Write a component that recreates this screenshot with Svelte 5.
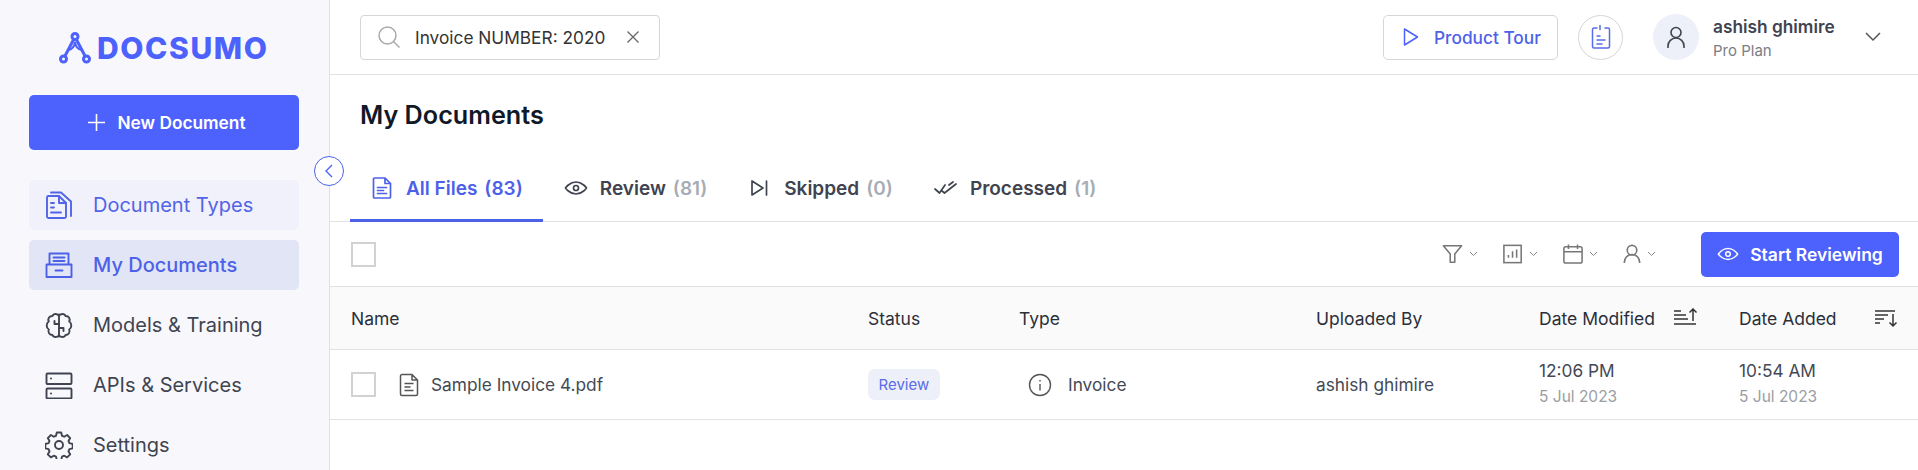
<script>
	let query = 'Invoice NUMBER: 2020';

	const nav = [
		{ label: 'Document Types', icon: 'types', cls: 'soft' },
		{ label: 'My Documents', icon: 'docs', cls: 'active' },
		{ label: 'Models & Training', icon: 'brain', cls: '' },
		{ label: 'APIs & Services', icon: 'server', cls: '' },
		{ label: 'Settings', icon: 'gear', cls: '' }
	];

	const tabs = [
		{ label: 'All Files', count: 83, icon: 'file', active: true },
		{ label: 'Review', count: 81, icon: 'eye' },
		{ label: 'Skipped', count: 0, icon: 'skip' },
		{ label: 'Processed', count: 1, icon: 'checks' }
	];
</script>

<div class="app">
	<aside class="sidebar">
		<div class="logo">
			<svg width="32" height="32" viewBox="0 0 32 32" fill="none" stroke="currentColor" stroke-width="3">
				<circle cx="16" cy="4.500" r="3" />
				<circle cx="4.500" cy="27" r="3" />
				<circle cx="27.500" cy="27" r="3" />
				<path d="M14.600 7.500 L6 24 M17.400 7.500 L26 24" />
				<path d="M9.500 18 Q15 17 16 10 Q17 17 22.500 18" stroke-width="2" />
			</svg>
			<span>DOCSUMO</span>
		</div>
		<button class="new-doc">
			<svg width="17" height="17" viewBox="0 0 17 17" stroke="#fff" stroke-width="1.600"><path d="M8.500 0v17M0 8.500h17" /></svg>
			New Document
		</button>
		<nav>
			{#each nav as item}
				<div class="nav-item {item.cls}">
					<svg class="nav-icon" width="28" height="28" viewBox="0 0 28 28" fill="none" stroke="currentColor" stroke-width="1.900" stroke-linecap="round" stroke-linejoin="round">
						{#if item.icon === 'types'}
							<path d="M2 6.500A1.500 1.500 0 0 1 3.500 5H14l7 7v13.500a1.500 1.500 0 0 1-1.500 1.500h-16A1.500 1.500 0 0 1 2 25.500z" />
							<path d="M6 1.500h10l10 9V25M14 5v7h7M6 12h3M6 16.500h3M6 21.500h10" />
						{:else if item.icon === 'docs'}
							<path d="M4.500 13V2.500h19V13M1.500 13.500h25V26h-25zM8.500 6.500h11M8.500 10h11M10.500 19.500h7" />
						{:else if item.icon === 'brain'}
							<path d="M14 3.500v22M14 5C13 2.500 8.500 2 7.500 5 4 5 2.500 8 3.800 10.500 1 12 1 17 3.800 18.500 2.500 21 4.500 24 7.500 24c1 3 5.500 2.500 6.500 0" />
							<path d="M14 5c1-2.500 5.500-3 6.500 0 3.500 0 5 3 3.700 5.500 2.800 1.500 2.800 6.500 0 8 1.300 2.500-.7 5.500-3.700 5.500-1 3-5.500 2.500-6.500 0" />
							<path d="M14 13H9.500v-3M14 17h4.500v3" />
						{:else if item.icon === 'server'}
							<rect x="1.500" y="2.500" width="25" height="10.500" rx="1" />
							<rect x="1.500" y="17.500" width="25" height="10" rx="1" />
							<path d="M6 7.500h.1M6 22.500h.1" />
						{:else}
							<circle cx="14" cy="14" r="4" />
							<path d="M11.800 1.500h4.400l.8 3.300 2.200.9 2.900-1.700 3.100 3.100-1.700 2.900.9 2.200 3.300.8v4.400l-3.300.8-.9 2.200 1.700 2.900-3.100 3.100-2.900-1.700-2.200.9-.8 3.300h-4.400l-.8-3.300-2.200-.9-2.900 1.700-3.100-3.100 1.700-2.900-.9-2.200-3.300-.8v-4.400l3.300-.8.9-2.200-1.700-2.900 3.100-3.100 2.900 1.700 2.200-.9z" />
						{/if}
					</svg>
					<span>{item.label}</span>
				</div>
			{/each}
		</nav>
	</aside>

	<button class="collapse" aria-label="Collapse">
		<svg width="10" height="14" viewBox="0 0 10 14" fill="none" stroke="#4d61fc" stroke-width="1.400"><path d="M8 1 2 7l6 6" /></svg>
	</button>

	<main>
		<header class="topbar">
			<div class="search">
				<svg width="22" height="22" viewBox="0 0 22 22" fill="none" stroke="#a9a9a9" stroke-width="1.500"><circle cx="9.500" cy="9.500" r="8.500" /><path d="M15.500 15.500l6 6" /></svg>
				<span class="query">{query}</span>
				<svg width="14" height="14" viewBox="0 0 14 14" fill="none" stroke="#666" stroke-width="1.300"><path d="M1.500 1.500l11 11M12.500 1.500l-11 11" /></svg>
			</div>
			<div class="top-right">
				<button class="tour">
					<svg width="16" height="20" viewBox="0 0 16 20" fill="none" stroke="#4d61fc" stroke-width="1.500" stroke-linejoin="round"><path d="M1.500 2v16L14.500 10z" /></svg>
					Product Tour
				</button>
				<div class="round-btn">
					<svg width="20" height="26" viewBox="0 0 20 26" fill="none" stroke="#5a6ce8" stroke-width="1.500" stroke-linecap="round"><path d="M6 4H3a1.500 1.500 0 0 0-1.500 1.500v17A1.500 1.500 0 0 0 3 24h14a1.500 1.500 0 0 0 1.500-1.500v-17A1.500 1.500 0 0 0 17 4h-3M9 1.500v4M6 12h3M6 16h8M6 20h5" /></svg>
				</div>
				<div class="avatar">
					<svg width="18" height="23" viewBox="0 0 18 23" fill="none" stroke="#3e4451" stroke-width="1.600"><circle cx="9" cy="6.500" r="5" /><path d="M1 22v-2a8 8 0 0 1 16 0v2" /></svg>
				</div>
				<div class="user">
					<div class="user-name">ashish ghimire</div>
					<div class="user-plan">Pro Plan</div>
				</div>
				<svg class="caret" width="16" height="10" viewBox="0 0 16 10" fill="none" stroke="#555" stroke-width="1.500"><path d="M1 1l7 7 7-7" /></svg>
			</div>
		</header>

		<h1>My Documents</h1>

		<div class="tabs">
			{#each tabs as tab}
				<div class="tab" class:active={tab.active}>
					<svg width="24" height="24" viewBox="0 0 24 24" fill="none" stroke="currentColor" stroke-width="1.700" stroke-linecap="round" stroke-linejoin="round">
						{#if tab.icon === 'file'}
							<path d="M3.500 3a1 1 0 0 1 1-1H15l5.500 5.500V21a1 1 0 0 1-1 1h-15a1 1 0 0 1-1-1zM15 2v5.500h5.500M7.500 11.500h9M7.500 14.500h6M7.500 17.500h9" />
						{:else if tab.icon === 'eye'}
							<path d="M1.500 12S5.500 6 12 6s10.500 6 10.500 6-4 6-10.500 6S1.500 12 1.500 12z" /><circle cx="12" cy="12" r="2.500" />
						{:else if tab.icon === 'skip'}
							<path d="M4 5v14l11-7zM18.500 5v14" />
						{:else}
							<path d="M1 13l4.500 4L11 9M8 15l2.500 2L22 8M15 9l4-3" />
						{/if}
					</svg>
					<span class="tab-label">{tab.label}</span>
					<span class="tab-count">({tab.count})</span>
				</div>
			{/each}
		</div>

		<div class="toolbar">
			<span class="check"></span>
			<div class="tools">
				<div class="tool">
					<svg width="21" height="20" viewBox="0 0 22 22" fill="none" stroke="#777" stroke-width="1.700" stroke-linejoin="round"><path d="M1 2h20l-7.500 9v9h-5v-9z" /></svg>
					<svg class="chev" width="9" height="6" viewBox="0 0 9 6" fill="none" stroke="#888"><path d="M1 1l3.500 3.500L8 1" /></svg>
				</div>
				<div class="tool">
					<svg width="20" height="20" viewBox="0 0 22 22" fill="none" stroke="#777" stroke-width="1.700"><rect x="1" y="1.500" width="19" height="19" /><path d="M6 15v-3M10.500 15V8M15 15V6" /></svg>
					<svg class="chev" width="9" height="6" viewBox="0 0 9 6" fill="none" stroke="#888"><path d="M1 1l3.500 3.500L8 1" /></svg>
				</div>
				<div class="tool">
					<svg width="20" height="20" viewBox="0 0 22 22" fill="none" stroke="#777" stroke-width="1.700"><rect x="1" y="3" width="20" height="18" rx="2" /><path d="M1 8.500h20M6 0.500v5M16 0.500v5" /></svg>
					<svg class="chev" width="9" height="6" viewBox="0 0 9 6" fill="none" stroke="#888"><path d="M1 1l3.500 3.500L8 1" /></svg>
				</div>
				<div class="tool">
					<svg width="18" height="21" viewBox="0 0 18 22" fill="none" stroke="#777" stroke-width="1.700"><circle cx="9" cy="6.500" r="5" /><path d="M1 20v-1a8 8 0 0 1 16 0v1" /></svg>
					<svg class="chev" width="9" height="6" viewBox="0 0 9 6" fill="none" stroke="#888"><path d="M1 1l3.500 3.500L8 1" /></svg>
				</div>
			</div>
			<button class="start">
				<svg width="22" height="22" viewBox="0 0 24 24" fill="none" stroke="#fff" stroke-width="1.600"><path d="M1.500 12S5.500 6 12 6s10.500 6 10.500 6-4 6-10.500 6S1.500 12 1.500 12z" /><circle cx="12" cy="12" r="2.500" /></svg>
				Start Reviewing
			</button>
		</div>

		<div class="row head">
			<div>Name</div>
			<div>Status</div>
			<div>Type</div>
			<div>Uploaded By</div>
			<div class="sort m">
				Date Modified
				<svg width="24" height="20" viewBox="0 0 24 20" fill="none" stroke="#333" stroke-width="1.500"><path d="M0 3h7M0 7h12M0 11h14M0 16h22M19 13V1M15.500 4.500 19 1l3.500 3.500" /></svg>
			</div>
			<div class="sort a">
				Date Added
				<svg width="24" height="20" viewBox="0 0 24 20" fill="none" stroke="#333" stroke-width="1.500"><path d="M0 3h20M0 7h13M0 11h9M0 15h5M18 6v12M14.500 14.500 18 18l3.500-3.500" /></svg>
			</div>
		</div>

		<div class="row body">
			<div class="name">
				<span class="check small"></span>
				<svg width="20" height="24" viewBox="0 0 20 24" fill="none" stroke="#555" stroke-width="1.500" stroke-linejoin="round"><path d="M1.500 3a1.500 1.500 0 0 1 1.500-1.500h10l5.500 5.500v14a1.500 1.500 0 0 1-1.500 1.500H3A1.500 1.500 0 0 1 1.500 21zM13 1.500V7h5.500M5.500 10.500h9M5.500 14h6M5.500 17.500h9" /></svg>
				<span>Sample Invoice 4.pdf</span>
			</div>
			<div><span class="badge">Review</span></div>
			<div class="type">
				<svg width="24" height="24" viewBox="0 0 24 24" fill="none" stroke="#555" stroke-width="1.400"><circle cx="12" cy="12" r="10.500" /><path d="M12 11v6.500M12 7v1.500" /></svg>
				Invoice
			</div>
			<div>ashish ghimire</div>
			<div class="when"><div>12:06 PM</div><div class="date">5 Jul 2023</div></div>
			<div class="when"><div>10:54 AM</div><div class="date">5 Jul 2023</div></div>
		</div>
	</main>
</div>

<style>
	:global(body) {
		margin: 0;
		background: #fff;
		font-family: Inter, 'Liberation Sans', sans-serif;
	}

	button {
		font-family: inherit;
		cursor: pointer;
	}

	.app {
		display: flex;
		height: 470px;
		overflow: hidden;
		position: relative;
	}

	.sidebar {
		width: 330px;
		flex: none;
		box-sizing: border-box;
		background: #f8f8fc;
		border-right: 1px solid #dfdfe4;
		padding: 32px 30px 0 29px;
	}

	.logo {
		display: flex;
		align-items: center;
		gap: 6px;
		height: 32px;
		padding-left: 30px;
		color: #4d61fc;
		font-size: 30px;
		font-weight: 800;
		letter-spacing: 1.600px;
	}

	.new-doc {
		display: flex;
		align-items: center;
		justify-content: center;
		gap: 12px;
		width: 270px;
		height: 55px;
		margin-top: 31px;
		padding: 0 0 0 6px;
		background: #4d61fc;
		border: none;
		border-radius: 5px;
		color: #fff;
		font-size: 17.300px;
		font-weight: 600;
	}

	nav {
		display: flex;
		flex-direction: column;
		gap: 10px;
		margin-top: 30px;
	}

	.nav-item {
		display: flex;
		align-items: center;
		gap: 20px;
		height: 50px;
		padding-left: 16px;
		border-radius: 5px;
		color: #3f4450;
		font-size: 20px;
	}

	.nav-item.soft {
		background: #f0f1fa;
		color: #5264e6;
	}

	.nav-item.active {
		background: #e2e5f6;
		color: #4d61e8;
		font-weight: 500;
	}

	.collapse {
		position: absolute;
		left: 314px;
		top: 156px;
		width: 30px;
		height: 30px;
		padding: 0;
		display: flex;
		align-items: center;
		justify-content: center;
		background: #fff;
		border: 1px solid #4d61e8;
		border-radius: 50%;
	}

	main {
		flex: 1;
		min-width: 0;
	}

	.topbar {
		display: flex;
		align-items: center;
		justify-content: space-between;
		height: 74px;
		border-bottom: 1px solid #e2e2e2;
		padding: 0 37px 0 30px;
	}

	.search {
		display: flex;
		align-items: center;
		width: 300px;
		height: 45px;
		box-sizing: border-box;
		border: 1px solid #d6d6d6;
		border-radius: 4px;
		padding: 0 19px 0 17px;
		color: #333;
		font-size: 17.300px;
	}

	.query {
		margin-left: 15px;
		flex: 1;
		white-space: nowrap;
	}

	.top-right {
		display: flex;
		align-items: center;
	}

	.tour {
		display: flex;
		align-items: center;
		gap: 15px;
		width: 175px;
		height: 45px;
		box-sizing: border-box;
		padding: 0 0 0 19px;
		background: #fff;
		border: 1px solid #d6d6d6;
		border-radius: 5px;
		color: #4d61e8;
		font-size: 17.300px;
		font-weight: 500;
	}

	.round-btn {
		display: flex;
		align-items: center;
		justify-content: center;
		width: 45px;
		height: 45px;
		margin-left: 20px;
		box-sizing: border-box;
		border: 1px solid #d6d6d6;
		border-radius: 50%;
	}

	.avatar {
		display: flex;
		align-items: center;
		justify-content: center;
		width: 46px;
		height: 46px;
		margin-left: 30px;
		background: #edf0f8;
		border-radius: 50%;
	}

	.user {
		margin-left: 14px;
		width: 152px;
		padding-top: 4px;
	}

	.user-name {
		font-size: 17.300px;
		font-weight: 600;
		color: #3f4450;
		line-height: 24px;
	}

	.user-plan {
		font-size: 15px;
		color: #7a7d85;
		line-height: 24px;
	}

	h1 {
		margin: 0;
		padding: 24px 0 0 30px;
		height: 55px;
		font-size: 25.200px;
		line-height: 32px;
		font-weight: 600;
		color: #111827;
	}

	.tabs {
		display: flex;
		gap: 1px;
		height: 68px;
		box-sizing: border-box;
		padding-left: 20px;
		border-bottom: 1px solid #e2e2e2;
	}

	.tab {
		display: flex;
		align-items: center;
		gap: 7px;
		height: 68px;
		box-sizing: border-box;
		padding: 0 20px 0 20px;
		color: #3f4450;
		font-size: 19px;
		font-weight: 600;
		white-space: nowrap;
	}

	.tab svg {
		margin-right: 5px;
	}

	.tab.active {
		color: #4d61e8;
		border-bottom: 3px solid #4d61e8;
		padding-top: 3px;
	}

	.tab-count {
		color: #a8acb4;
	}

	.tab.active .tab-count {
		color: #4d61e8;
	}

	.toolbar {
		display: flex;
		align-items: center;
		height: 64px;
		padding: 0 19px 0 21px;
		border-bottom: 1px solid #e2e2e2;
	}

	.check {
		display: block;
		width: 25px;
		height: 25px;
		box-sizing: border-box;
		border: 2px solid #d2d2d2;
		flex: none;
	}

	.tools {
		display: flex;
		align-items: center;
		gap: 25px;
		margin-left: auto;
	}

	.tool {
		display: flex;
		align-items: center;
		gap: 6px;
	}

	.start {
		display: flex;
		align-items: center;
		justify-content: center;
		gap: 11px;
		width: 198px;
		height: 45px;
		margin-left: 45px;
		padding: 0;
		background: #4d61fc;
		border: none;
		border-radius: 5px;
		color: #fff;
		font-size: 17.500px;
		font-weight: 600;
	}

	.row {
		display: grid;
		grid-template-columns: 517px 151px 297px 223px 200px 178px;
		align-items: center;
		padding-left: 21px;
		font-size: 17.300px;
		color: #444955;
		border-bottom: 1px solid #e2e2e2;
	}

	.head {
		height: 62px;
		background: #fafafa;
		color: #2a2f3a;
		font-size: 17.500px;
	}

	.body {
		height: 69px;
	}

	.sort {
		display: flex;
		align-items: center;
		justify-content: space-between;
	}

	.sort.m {
		width: 159px;
	}

	.sort.a {
		width: 160px;
	}

	.name {
		display: flex;
		align-items: center;
	}

	.name svg {
		margin-left: 23px;
		margin-right: 12px;
	}

	.badge {
		display: inline-block;
		padding: 0 10.500px;
		line-height: 31px;
		background: #edf0f8;
		border-radius: 7px;
		color: #5a6ce8;
		font-size: 15px;
	}

	.type {
		display: flex;
		align-items: center;
		gap: 16px;
		padding-left: 9px;
	}

	.when {
		line-height: 26px;
		margin-top: -2px;
	}

	.date {
		color: #9a9da3;
		font-size: 15.500px;
	}
</style>
